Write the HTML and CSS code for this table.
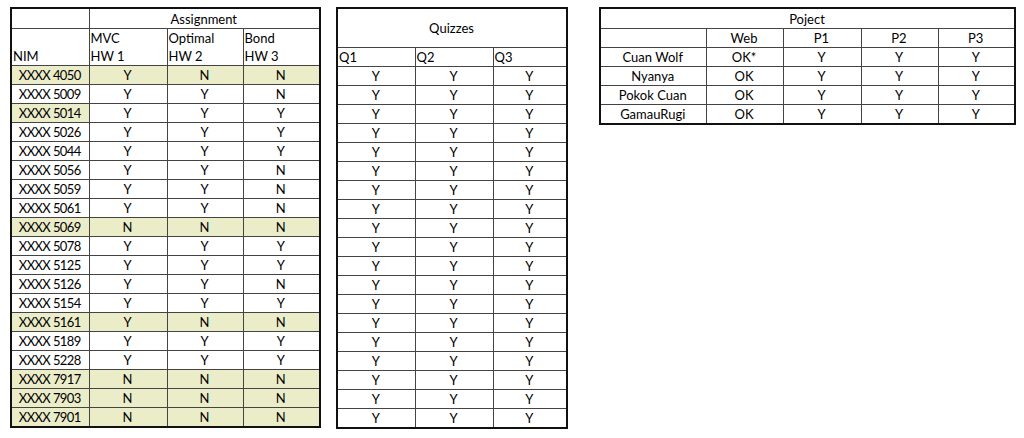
FILE: index.html
```html
<!DOCTYPE html>
<html>
<head>
<meta charset="utf-8">
<link rel="stylesheet" href="styles.css">
</head>
<body>
<div class="sheet">
  <table class="grid assign">
    <colgroup><col class="c78"><col class="c78"><col class="c76"><col class="c77"></colgroup>
    <tr class="h20"><td></td><td colspan="3" class="center">Assignment</td></tr>
    <tr class="nob"><td class="nob-b"></td><td class="nob-b">MVC</td><td class="nob-b">Optimal</td><td class="nob-b">Bond</td></tr>
    <tr><td>NIM</td><td>HW 1</td><td>HW 2</td><td>HW 3</td></tr>
    <tr class="hl"><td class="center nim">XXXX 4050</td><td class="center">Y</td><td class="center">N</td><td class="center">N</td></tr>
    <tr><td class="center nim">XXXX 5009</td><td class="center">Y</td><td class="center">Y</td><td class="center">N</td></tr>
    <tr><td class="center nim hlc">XXXX 5014</td><td class="center">Y</td><td class="center">Y</td><td class="center">Y</td></tr>
    <tr><td class="center nim">XXXX 5026</td><td class="center">Y</td><td class="center">Y</td><td class="center">Y</td></tr>
    <tr><td class="center nim">XXXX 5044</td><td class="center">Y</td><td class="center">Y</td><td class="center">Y</td></tr>
    <tr><td class="center nim">XXXX 5056</td><td class="center">Y</td><td class="center">Y</td><td class="center">N</td></tr>
    <tr><td class="center nim">XXXX 5059</td><td class="center">Y</td><td class="center">Y</td><td class="center">N</td></tr>
    <tr><td class="center nim">XXXX 5061</td><td class="center">Y</td><td class="center">Y</td><td class="center">N</td></tr>
    <tr class="hl"><td class="center nim">XXXX 5069</td><td class="center">N</td><td class="center">N</td><td class="center">N</td></tr>
    <tr><td class="center nim">XXXX 5078</td><td class="center">Y</td><td class="center">Y</td><td class="center">Y</td></tr>
    <tr><td class="center nim">XXXX 5125</td><td class="center">Y</td><td class="center">Y</td><td class="center">Y</td></tr>
    <tr><td class="center nim">XXXX 5126</td><td class="center">Y</td><td class="center">Y</td><td class="center">N</td></tr>
    <tr><td class="center nim">XXXX 5154</td><td class="center">Y</td><td class="center">Y</td><td class="center">Y</td></tr>
    <tr class="hl"><td class="center nim">XXXX 5161</td><td class="center">Y</td><td class="center">N</td><td class="center">N</td></tr>
    <tr><td class="center nim">XXXX 5189</td><td class="center">Y</td><td class="center">Y</td><td class="center">Y</td></tr>
    <tr><td class="center nim">XXXX 5228</td><td class="center">Y</td><td class="center">Y</td><td class="center">Y</td></tr>
    <tr class="hl"><td class="center nim">XXXX 7917</td><td class="center">N</td><td class="center">N</td><td class="center">N</td></tr>
    <tr class="hl"><td class="center nim">XXXX 7903</td><td class="center">N</td><td class="center">N</td><td class="center">N</td></tr>
    <tr class="hl"><td class="center nim">XXXX 7901</td><td class="center">N</td><td class="center">N</td><td class="center">N</td></tr>
  </table>

  <table class="grid quiz">
    <colgroup><col class="c78"><col class="c78"><col class="c74"></colgroup>
    <tr class="h39"><td colspan="3" class="center">Quizzes</td></tr>
    <tr><td>Q1</td><td>Q2</td><td>Q3</td></tr>
    <tr><td class="center">Y</td><td class="center">Y</td><td class="center">Y</td></tr>
    <tr><td class="center">Y</td><td class="center">Y</td><td class="center">Y</td></tr>
    <tr><td class="center">Y</td><td class="center">Y</td><td class="center">Y</td></tr>
    <tr><td class="center">Y</td><td class="center">Y</td><td class="center">Y</td></tr>
    <tr><td class="center">Y</td><td class="center">Y</td><td class="center">Y</td></tr>
    <tr><td class="center">Y</td><td class="center">Y</td><td class="center">Y</td></tr>
    <tr><td class="center">Y</td><td class="center">Y</td><td class="center">Y</td></tr>
    <tr><td class="center">Y</td><td class="center">Y</td><td class="center">Y</td></tr>
    <tr><td class="center">Y</td><td class="center">Y</td><td class="center">Y</td></tr>
    <tr><td class="center">Y</td><td class="center">Y</td><td class="center">Y</td></tr>
    <tr><td class="center">Y</td><td class="center">Y</td><td class="center">Y</td></tr>
    <tr><td class="center">Y</td><td class="center">Y</td><td class="center">Y</td></tr>
    <tr><td class="center">Y</td><td class="center">Y</td><td class="center">Y</td></tr>
    <tr><td class="center">Y</td><td class="center">Y</td><td class="center">Y</td></tr>
    <tr><td class="center">Y</td><td class="center">Y</td><td class="center">Y</td></tr>
    <tr><td class="center">Y</td><td class="center">Y</td><td class="center">Y</td></tr>
    <tr><td class="center">Y</td><td class="center">Y</td><td class="center">Y</td></tr>
    <tr><td class="center">Y</td><td class="center">Y</td><td class="center">Y</td></tr>
    <tr><td class="center">Y</td><td class="center">Y</td><td class="center">Y</td></tr>
  </table>

  <table class="grid proj">
    <colgroup><col class="c106"><col class="c77"><col class="c78"><col class="c77"><col class="c77"></colgroup>
    <tr class="h20"><td colspan="5" class="center">Poject</td></tr>
    <tr><td></td><td class="center">Web</td><td class="center">P1</td><td class="center">P2</td><td class="center">P3</td></tr>
    <tr><td class="center">Cuan Wolf</td><td class="center">OK*</td><td class="center">Y</td><td class="center">Y</td><td class="center">Y</td></tr>
    <tr><td class="center">Nyanya</td><td class="center">OK</td><td class="center">Y</td><td class="center">Y</td><td class="center">Y</td></tr>
    <tr><td class="center">Pokok Cuan</td><td class="center">OK</td><td class="center">Y</td><td class="center">Y</td><td class="center">Y</td></tr>
    <tr><td class="center">GamauRugi</td><td class="center">OK</td><td class="center">Y</td><td class="center">Y</td><td class="center">Y</td></tr>
  </table>
</div>
</body>
</html>
```

FILE: styles.css
```css
html, body {
  margin: 0;
  padding: 0;
  background: #ffffff;
}

.sheet {
  display: flex;
  align-items: flex-start;
  padding: 7px 0 0 10px;
  gap: 15px;
  font-family: Lato, "Liberation Sans", sans-serif;
  font-size: 13px;
  color: #000;
}

.grid {
  border-collapse: collapse;
  border: 2px solid #111;
  table-layout: fixed;
}

.grid td {
  border: 1px solid #444;
  height: 18px;
  padding: 0 2px 0 1px;
  line-height: 18px;
  white-space: nowrap;
  overflow: hidden;
  vertical-align: middle;
}

.grid td.center { text-align: center; }

.grid td.nim { letter-spacing: -0.6px; }

.grid tr.h20 td { height: 19px; }
.grid tr.h39 td { height: 38px; }

.grid td.nob-b { border-bottom: none; }
.grid tr.nob + tr td { border-top: none; }

.grid tr.hl td, .grid td.hlc { background: #ebedc9; }

.proj { margin-left: 16px; }

.c78 { width: 78px; }
.c77 { width: 77px; }
.c76 { width: 76px; }
.c74 { width: 74px; }
.c106 { width: 106px; }
```
